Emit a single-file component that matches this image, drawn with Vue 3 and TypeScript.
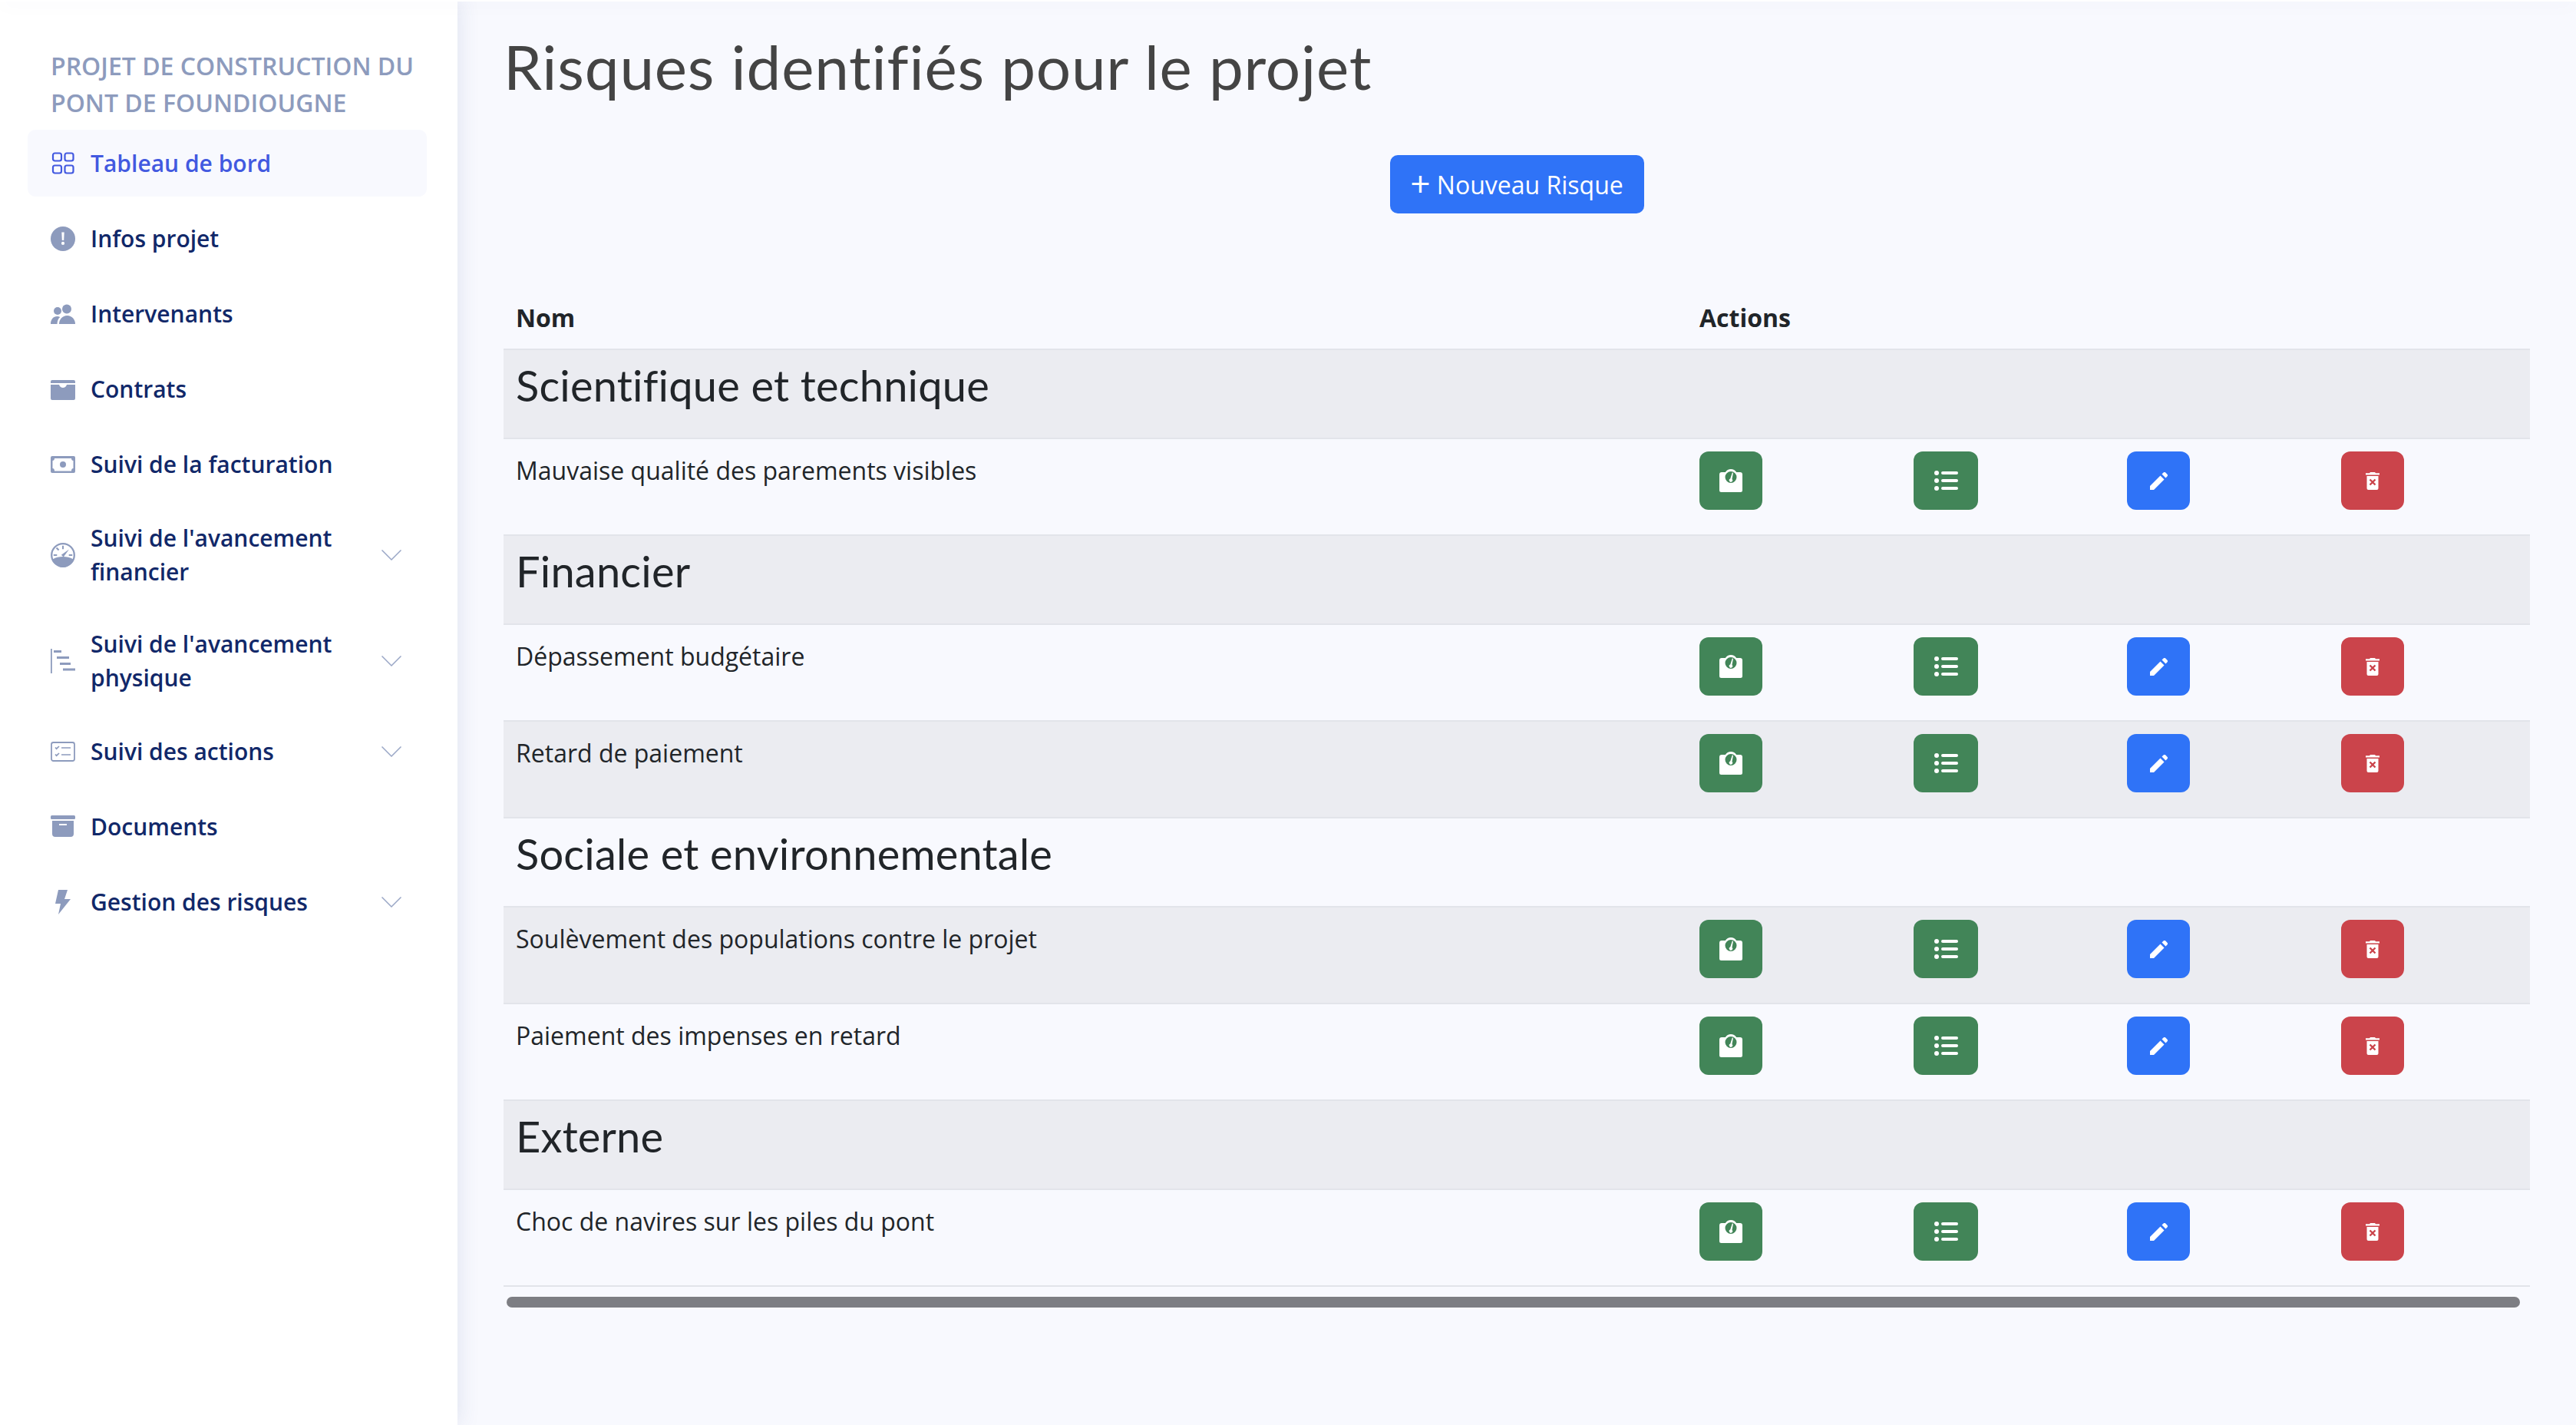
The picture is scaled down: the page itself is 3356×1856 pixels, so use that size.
<template>
  <div class="page">
    <div class="topline"></div>
    <aside class="sidebar">
      <div class="project-title">PROJET DE CONSTRUCTION DU PONT DE FOUNDIOUGNE</div>
      <nav class="menu">
        <a
          v-for="item in menu"
          :key="item.label"
          :class="['menu-item', { active: item.icon === 'dashboard' }]"
        >
          <svg class="menu-icon" viewBox="0 0 32 32">
            <g v-if="item.icon === 'dashboard'" fill="none" stroke="currentColor" stroke-width="2.2">
              <rect x="3" y="2.5" width="11" height="10" rx="2.5" />
              <rect x="18.500" y="2.5" width="11" height="10" rx="2.5" />
              <rect x="3" y="18.500" width="11" height="10" rx="2.5" />
              <rect x="18.500" y="18.500" width="11" height="10" rx="2.5" />
            </g>
            <g v-else-if="item.icon === 'info'">
              <circle cx="16" cy="16" r="16" />
              <path fill="#fff" d="M14.300 7.500h3.400l-.5 10.500h-2.400zM16 19.800a2.100 2.100 0 1 1 0 4.200 2.100 2.100 0 0 1 0-4.200z" />
            </g>
            <g v-else-if="item.icon === 'people'">
              <circle cx="9" cy="12" r="5" />
              <circle cx="21" cy="9.500" r="6" />
              <path d="M0 29c0-6 3.500-10 8.500-10 1.500 0 2.700.3 3.700.9C9.700 22.200 8.500 25.300 8.500 29z" />
              <path d="M11 29c0-6 4.300-11 10.500-11S32 23 32 29z" />
            </g>
            <path
              v-else-if="item.icon === 'contract'"
              fill-rule="evenodd"
              d="M2 4h28a2 2 0 0 1 2 2v2H0V6a2 2 0 0 1 2-2zM0 10h11c.8 2.500 2.700 4 5 4s4.200-1.500 5-4h11v18a2 2 0 0 1-2 2H2a2 2 0 0 1-2-2z"
            />
            <path
              v-else-if="item.icon === 'money'"
              fill-rule="evenodd"
              d="M2 5h28a2 2 0 0 1 2 2v18a2 2 0 0 1-2 2H2a2 2 0 0 1-2-2V7a2 2 0 0 1 2-2zm3 3c0 2-1 3-2.500 3v10C4 21 5 22 5 24.500h22c0-2.500 1-3.500 2.500-3.500V11C28 11 27 10 27 8zm11 4a4 4 0 1 1 0 8 4 4 0 0 1 0-8z"
            />
            <g v-else-if="item.icon === 'gauge'">
              <circle cx="16" cy="16" r="14.800" fill="none" stroke="currentColor" stroke-width="2.300" />
              <path d="M2.500 21.500C7 18.500 11 18 16 18s9 .5 13.500 3.500C27 27.500 22 32 16 32S5 27.500 2.500 21.500z" />
              <path d="M15 3.800h2v4.500h-2zM6.800 7.200l1.500-1.400 3 3-1.500 1.400zM3.800 15h4.500v2H3.800zM23.700 15h4.500v2h-4.500z" />
              <path d="M13.800 15.800 24 8.600l-7.300 10z" />
            </g>
            <g v-else-if="item.icon === 'gantt'">
              <path d="M0 0h1.800v32H0zM4 2h10v3H4zM8 10h16v3H8zM12 18h14v3H12zM16 25.500h16v3H16z" />
            </g>
            <g v-else-if="item.icon === 'tasks'">
              <rect x="1" y="4" width="30" height="24" rx="2.500" fill="none" stroke="currentColor" stroke-width="1.800" />
              <path fill="none" stroke="currentColor" stroke-width="1.700" d="M6 10.500l1.600 1.700L11 9M6 19.500l1.600 1.700L11 18M14 11h12M14 20h12" />
            </g>
            <g v-else-if="item.icon === 'archive'">
              <rect x="0" y="1" width="32" height="5" rx="1.500" />
              <path fill-rule="evenodd" d="M2 8h28v17a4 4 0 0 1-4 4H6a4 4 0 0 1-4-4zm9 4v2h10v-2z" />
            </g>
            <path v-else d="M10 0h12l-4 12h8L10 32l3-14H6z" />
          </svg>
          <span class="menu-label">{{ item.label }}</span>
          <svg v-if="item.children" class="chevron" viewBox="0 0 26 14">
            <path d="M.5.5 13 13 25.500.5" fill="none" stroke="currentColor" stroke-width="1.500" />
          </svg>
        </a>
      </nav>
    </aside>

    <main class="content">
      <h1 class="title">Risques identifiés pour le projet</h1>
      <div class="new-row">
        <button class="new-btn"><span class="plus">+</span> Nouveau Risque</button>
      </div>

      <div class="table-wrap">
        <table class="risks">
          <colgroup>
            <col class="col-name" />
            <col class="col-action" />
            <col class="col-narrow" />
            <col class="col-action" />
            <col />
          </colgroup>
          <thead>
            <tr>
              <th>Nom</th>
              <th colspan="4">Actions</th>
            </tr>
          </thead>
          <tbody>
            <tr v-for="row in rows" :key="row.label">
              <td v-if="row.section" colspan="5"><h3>{{ row.label }}</h3></td>
              <template v-else>
                <td class="name-cell">{{ row.label }}</td>
                <td>
                  <button class="act green">
                    <svg width="30" height="30" viewBox="0 0 30 30">
                      <path
                        fill="#fff"
                        fill-rule="evenodd"
                        d="M15 0c3 0 5.500 1.500 7.200 4H27a3 3 0 0 1 3 3V27.500a2.500 2.500 0 0 1-2.500 2.500h-25A2.500 2.500 0 0 1 0 27.500V7a3 3 0 0 1 3-3h4.800C9.500 1.500 12 0 15 0zm0 3a7.500 7.500 0 1 0 0 15 7.500 7.500 0 0 0 0-15z"
                      />
                      <path fill="#fff" d="M18 4.800l-1.500 8.200a2.200 2.200 0 1 1-2.300-.5L16.800 4.500z" />
                    </svg>
                  </button>
                </td>
                <td>
                  <button class="act green wide">
                    <svg width="31" height="26" viewBox="0 0 31 26" fill="#fff">
                      <circle cx="3" cy="3" r="3" />
                      <circle cx="3" cy="13" r="3" />
                      <circle cx="3" cy="23" r="3" />
                      <rect x="9" y="1" width="22" height="4" rx="2" />
                      <rect x="9" y="11" width="22" height="4" rx="2" />
                      <rect x="9" y="21" width="22" height="4" rx="2" />
                    </svg>
                  </button>
                </td>
                <td>
                  <button class="act blue">
                    <svg width="23" height="23" viewBox="0 0 23 23" fill="#fff">
                      <path d="M0 18 13.500 4.500 18.500 9.500 5 23H0z" />
                      <path d="M15.500 2.500 17.500.6a2 2 0 0 1 2.800 0l2.100 2.100a2 2 0 0 1 0 2.800L20.500 7.500z" />
                    </svg>
                  </button>
                </td>
                <td>
                  <button class="act red">
                    <svg width="18" height="23" viewBox="0 0 18 23">
                      <path fill="#fff" d="M6 0h6l1 1.300h5v2.300H0V1.300h5z" />
                      <path fill="#fff" fill-rule="evenodd" d="M1.500 5h15v16a2 2 0 0 1-2 2h-11a2 2 0 0 1-2-2z" />
                      <path fill="none" stroke="#cb444b" stroke-width="2.400" d="M5.500 9.500l7 7M12.500 9.500l-7 7" />
                    </svg>
                  </button>
                </td>
              </template>
            </tr>
          </tbody>
        </table>
        <div class="scroll-thumb"></div>
      </div>
    </main>
  </div>
</template>

<script setup lang="ts">
interface MenuItem {
  label: string
  icon: string
  children?: boolean
}

interface Row {
  label: string
  section?: boolean
}

const menu: MenuItem[] = [
  { label: 'Tableau de bord', icon: 'dashboard' },
  { label: 'Infos projet', icon: 'info' },
  { label: 'Intervenants', icon: 'people' },
  { label: 'Contrats', icon: 'contract' },
  { label: 'Suivi de la facturation', icon: 'money' },
  { label: "Suivi de l'avancement financier", icon: 'gauge', children: true },
  { label: "Suivi de l'avancement physique", icon: 'gantt', children: true },
  { label: 'Suivi des actions', icon: 'tasks', children: true },
  { label: 'Documents', icon: 'archive' },
  { label: 'Gestion des risques', icon: 'bolt', children: true }
]

const rows: Row[] = [
  { label: 'Scientifique et technique', section: true },
  { label: 'Mauvaise qualité des parements visibles' },
  { label: 'Financier', section: true },
  { label: 'Dépassement budgétaire' },
  { label: 'Retard de paiement' },
  { label: 'Sociale et environnementale', section: true },
  { label: 'Soulèvement des populations contre le projet' },
  { label: 'Paiement des impenses en retard' },
  { label: 'Externe', section: true },
  { label: 'Choc de navires sur les piles du pont' }
]
</script>

<style>
html,
body {
  margin: 0;
  background: #f8f9fe;
}
</style>

<style scoped>
.page {
  display: flex;
  min-height: 1856px;
  position: relative;
  font-family: 'Open Sans', 'Noto Sans', sans-serif;
  color: #212529;
  overflow: hidden;
}

.topline {
  position: absolute;
  z-index: 3;
  top: 0;
  left: 0;
  right: 0;
  height: 2px;
  background: #fff;
  box-shadow: 0 0 26px rgba(60, 80, 140, 0.16);
}

.sidebar {
  position: relative;
  z-index: 2;
  width: 596px;
  flex-shrink: 0;
  box-sizing: border-box;
  padding: 62px 40px 0 36px;
  background: #fff;
  box-shadow: 0 0 28px rgba(60, 80, 140, 0.14);
}

.project-title {
  padding: 0 0 0 30px;
  font-size: 32px;
  line-height: 48px;
  font-weight: 600;
  color: #8d9bbd;
  margin-bottom: 11px;
}

.menu {
  display: flex;
  flex-direction: column;
  gap: 11px;
}

.menu-item {
  display: flex;
  align-items: center;
  min-height: 87px;
  box-sizing: border-box;
  padding: 19.5px 33px 19.5px 30px;
  border-radius: 10px;
  font-size: 30px;
  line-height: 44px;
  font-weight: 600;
  color: #112869;
}

.menu-item.active {
  background: #f8f9fe;
  color: #4259e0;
}

.menu-icon {
  width: 32px;
  height: 32px;
  flex-shrink: 0;
  margin-right: 20px;
  fill: #8d9bbd;
  color: #8d9bbd;
}

.menu-item.active .menu-icon {
  color: #4259e0;
  fill: #4259e0;
}

.menu-label {
  flex: 1;
  max-width: 330px;
}

.chevron {
  width: 26px;
  height: 14px;
  margin-left: auto;
  color: #9aa7c6;
}

.content {
  flex: 1;
  padding: 38px 60px 0;
  min-width: 0;
}

.title {
  margin: 0;
  font-family: 'Lato', 'Open Sans', sans-serif;
  font-size: 80px;
  line-height: 96px;
  font-weight: 400;
  letter-spacing: 0.8px;
  color: #444;
}

.new-row {
  display: flex;
  justify-content: center;
  margin-top: 68px;
}

.new-btn {
  height: 76px;
  width: 331px;
  border: none;
  border-radius: 10px;
  background: #2f73f7;
  color: #fff;
  font-family: inherit;
  font-size: 32px;
  padding: 0;
}

.plus {
  font-size: 46px;
  line-height: 32px;
  vertical-align: -3px;
}

.table-wrap {
  margin-top: 96px;
}

.risks {
  width: 100%;
  table-layout: fixed;
  border-collapse: collapse;
  font-size: 32px;
  line-height: 48px;
}

.col-name {
  width: 1542px;
}

.col-action {
  width: 279px;
}

.col-narrow {
  width: 278px;
}

.risks th {
  text-align: left;
  font-weight: 700;
  padding: 16px;
  border-bottom: 2px solid #e2e4ea;
}

.risks td {
  padding: 16px;
  vertical-align: top;
  border-bottom: 2px solid #e2e4ea;
}

.risks td.name-cell {
  padding-top: 17px;
}

.risks tbody tr:nth-child(odd) {
  background: #ebecf1;
}

.risks h3 {
  margin: 0 0 22px;
  font-family: 'Lato', 'Open Sans', sans-serif;
  font-size: 56px;
  line-height: 60px;
  font-weight: 400;
  letter-spacing: 0.2px;
}

.act {
  display: flex;
  align-items: center;
  justify-content: center;
  width: 82px;
  height: 76px;
  border: none;
  border-radius: 12px;
  padding: 0;
  margin-bottom: 16px;
}

.act.wide {
  width: 84px;
}

.green {
  background: #428558;
}

.blue {
  background: #2f73f7;
}

.red {
  background: #cb444b;
}

.scroll-thumb {
  height: 14px;
  margin: 13px 13px 0 4px;
  border-radius: 7px;
  background: #7d7e83;
}
</style>
